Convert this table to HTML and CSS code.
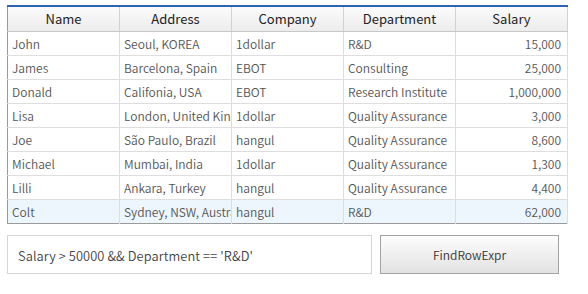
FILE: index.html
```html
<!DOCTYPE html>
<html>
<head>
<meta charset="utf-8">
<link rel="stylesheet" href="styles.css">
</head>
<body>
<div class="page">
  <table class="grid">
    <colgroup>
      <col class="c"><col class="c"><col class="c"><col class="c"><col class="c">
    </colgroup>
    <thead>
      <tr><th>Name</th><th>Address</th><th>Company</th><th>Department</th><th>Salary</th></tr>
    </thead>
    <tbody>
      <tr><td>John</td><td>Seoul, KOREA</td><td>1dollar</td><td>R&amp;D</td><td class="num">15,000</td></tr>
      <tr><td>James</td><td>Barcelona, Spain</td><td>EBOT</td><td>Consulting</td><td class="num">25,000</td></tr>
      <tr><td>Donald</td><td>Califonia, USA</td><td>EBOT</td><td>Research Institute</td><td class="num">1,000,000</td></tr>
      <tr><td>Lisa</td><td>London, United Kingdom</td><td>1dollar</td><td>Quality Assurance</td><td class="num">3,000</td></tr>
      <tr><td>Joe</td><td>São Paulo, Brazil</td><td>hangul</td><td>Quality Assurance</td><td class="num">8,600</td></tr>
      <tr><td>Michael</td><td>Mumbai, India</td><td>1dollar</td><td>Quality Assurance</td><td class="num">1,300</td></tr>
      <tr><td>Lilli</td><td>Ankara, Turkey</td><td>hangul</td><td>Quality Assurance</td><td class="num">4,400</td></tr>
      <tr class="sel"><td>Colt</td><td>Sydney, NSW, Australia</td><td>hangul</td><td>R&amp;D</td><td class="num">62,000</td></tr>
    </tbody>
  </table>
  <div class="controls">
    <div class="expr">Salary &gt; 50000 &amp;&amp; Department == 'R&amp;D'</div>
    <div class="btn">FindRowExpr</div>
  </div>
</div>
</body>
</html>
```

FILE: styles.css
```css
html, body {
  margin: 0;
  padding: 0;
  background: #ffffff;
}
.page {
  padding: 5px 0 0 7px;
  font-family: "Noto Sans CJK KR", "Noto Sans", sans-serif;
}
.grid {
  border-collapse: collapse;
  table-layout: fixed;
  width: 560px;
  border-top: 2px solid #2b64b3;
  border-left: 1px solid #9a9a9a;
  border-right: 1px solid #b0b0b0;
  border-bottom: 1px solid #9a9a9a;
}
.c { width: 112px; }
.grid th {
  height: 24px;
  padding: 0;
  font-size: 13px;
  font-weight: normal;
  color: #222;
  background: linear-gradient(#fbfbfb, #ececec);
  border-right: 1px solid #d2d2d2;
  border-bottom: 1px solid #c8c8c8;
  text-align: center;
  line-height: 24px;
}
.grid td {
  height: 23px;
  padding: 0 4px;
  font-size: 12px;
  font-weight: 350;
  color: #555;
  border-right: 1px solid #dedede;
  border-bottom: 1px solid #dedede;
  white-space: nowrap;
  overflow: hidden;
  text-overflow: clip;
  line-height: 23px;
}
.grid td.num {
  text-align: right;
  padding-right: 6px;
}
.grid tr.sel td {
  background: #eef6fd;
  border-bottom: none;
}
.controls {
  display: flex;
  align-items: flex-start;
  gap: 8px;
  margin-top: 11px;
}
.expr {
  width: 353px;
  height: 37px;
  border: 1px solid #d6d6d6;
  padding-left: 10px;
  font-size: 12.8px;
  font-weight: 350;
  color: #444;
  line-height: 39px;
  letter-spacing: 0.1px;
}
.btn {
  width: 177px;
  height: 37px;
  border: 1px solid #a3a3a3;
  background: linear-gradient(#fdfdfd, #e2e2e2);
  font-size: 12px;
  font-weight: 350;
  color: #333;
  text-align: center;
  line-height: 37px;
}
```
